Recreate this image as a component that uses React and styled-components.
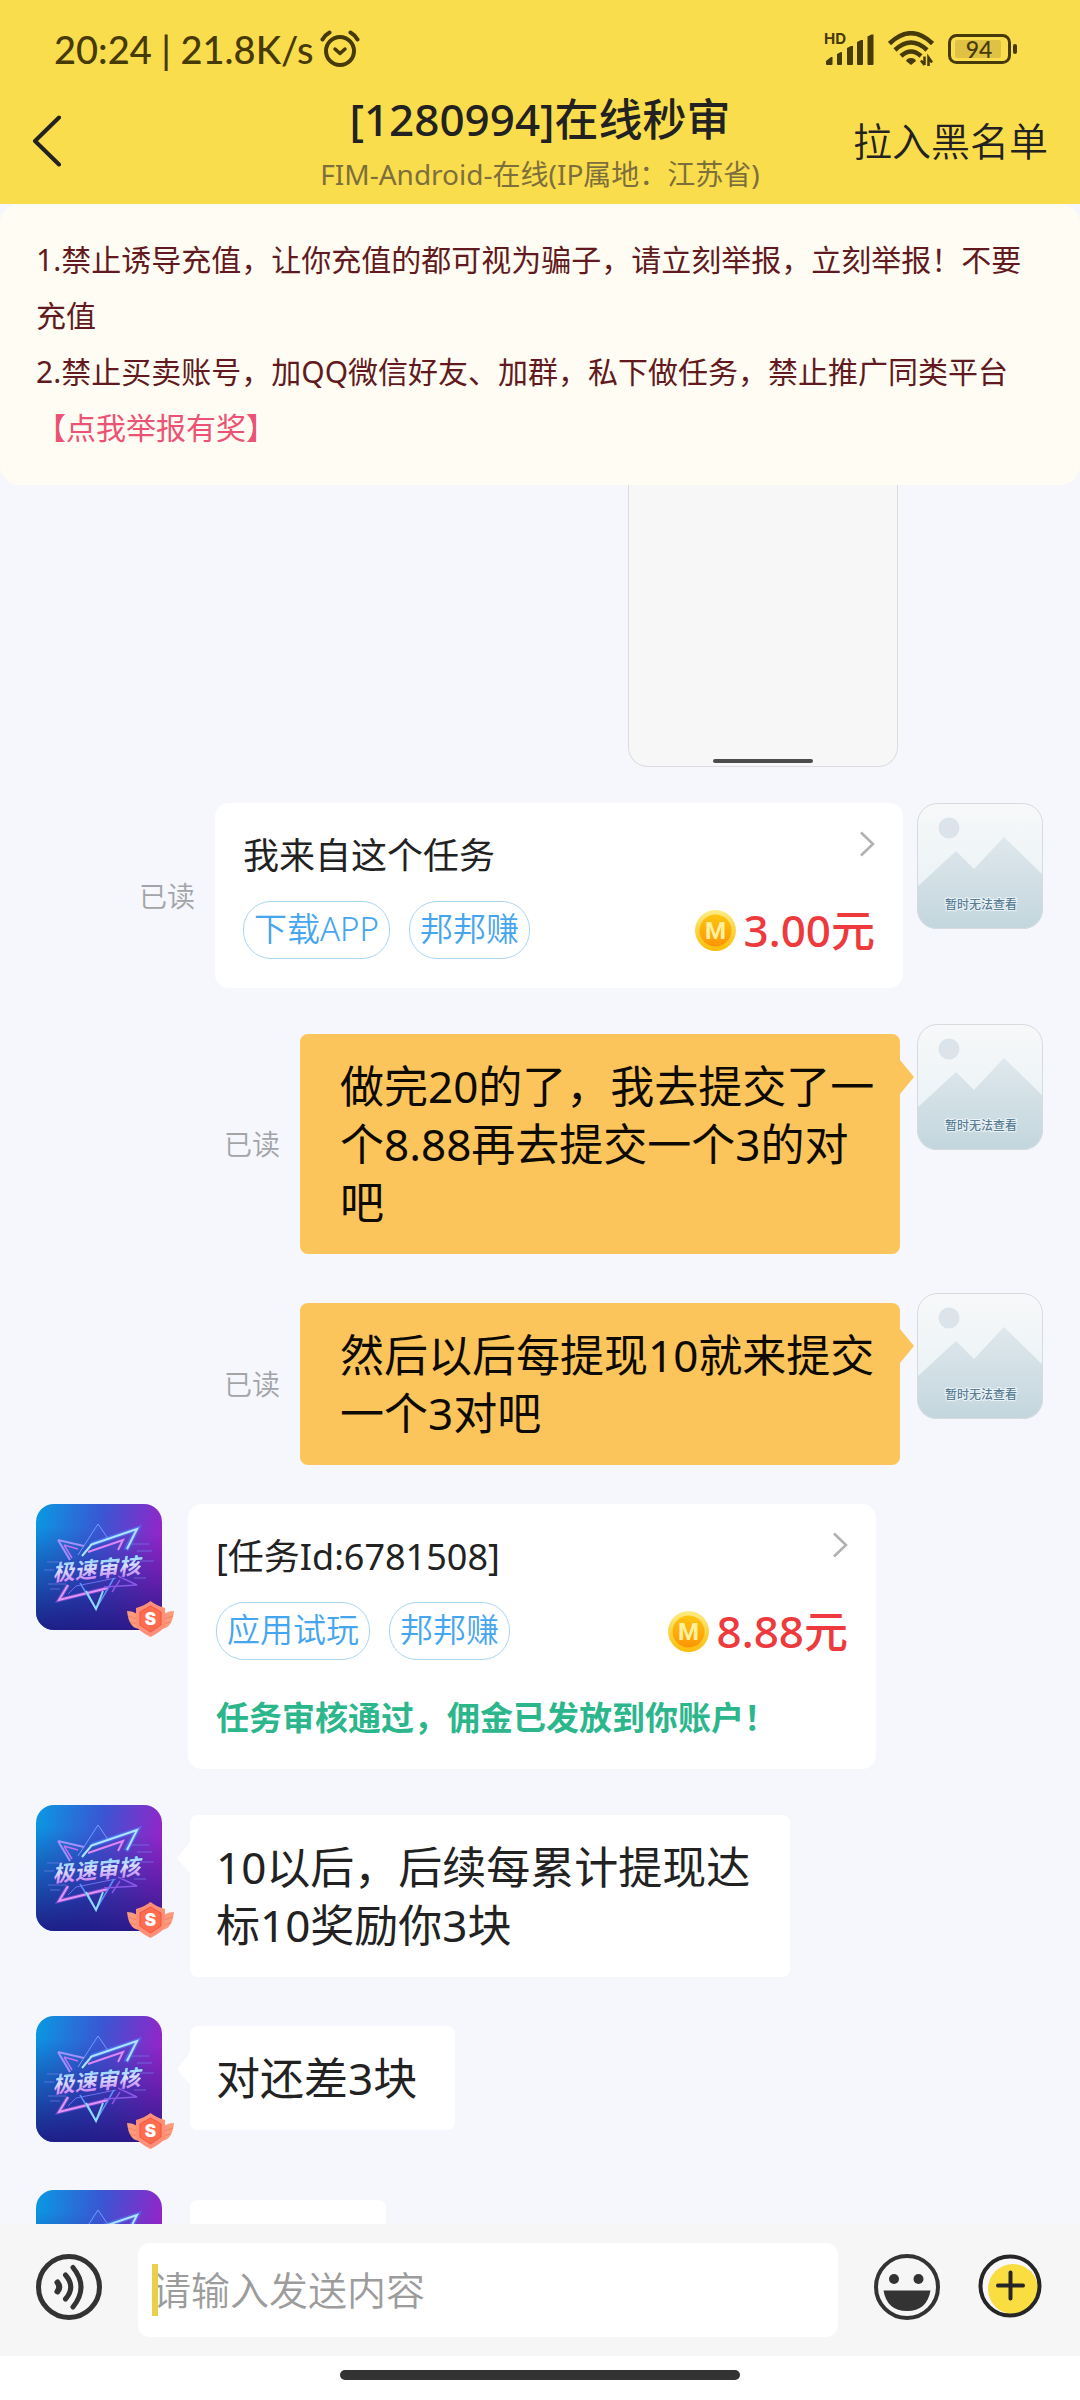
import styled, { createGlobalStyle, ThemeProvider } from "styled-components";

const theme = {
  colors: {
    yellow: "#fadd4c",
    chatBg: "#f5f7fc",
    notice: "#fffdf3",
    bubble: "#fbc55b",
    bar: "#f6f6f6",
    dark: "#333333",
    status: "#463a08",
    text: "#222222",
    blue: "#45a5ee",
    green: "#2bb68c",
    red: "#ee3a3c",
  },
};

const GlobalStyle = createGlobalStyle`
  * {
    box-sizing: border-box;
  }
  body {
    margin: 0;
    font-family: "Noto Sans", "Noto Sans CJK SC", sans-serif;
    color: ${(props) => props.theme.colors.text};
  }
  h1, p {
    margin: 0;
    font-weight: 400;
  }
  button {
    padding: 0;
    border: 0;
    background: none;
    font: inherit;
    color: inherit;
    cursor: pointer;
  }
  svg {
    display: block;
    flex: none;
  }
`;

const Page = styled.div`
  display: flex;
  flex-direction: column;
  height: 100vh;
  overflow: hidden;
  background-color: ${(props) => props.theme.colors.chatBg};
`;

/// header
const Header = styled.header`
  flex: none;
  background-color: ${(props) => props.theme.colors.yellow};
`;
const StatusBar = styled.div`
  display: flex;
  justify-content: space-between;
  align-items: center;
  height: 70px;
  padding: 28px 62px 0 54px;
  color: ${(props) => props.theme.colors.status};
`;
const StatusGroup = styled.div`
  display: flex;
  align-items: center;
  gap: ${(props) => props.$gap}px;
  font-family: Lato, sans-serif;
  font-size: 38px;
  font-weight: 500;
  line-height: 42px;
`;
const Nav = styled.nav`
  display: grid;
  grid-template-columns: 1fr auto 1fr;
  align-items: center;
  height: 134px;
  padding: 8px 32px 0;
`;
const BackButton = styled.button`
  justify-self: start;
`;
const Heading = styled.div`
  padding-top: 12px;
  text-align: center;
`;
const Title = styled.h1`
  font-size: 44px;
  font-weight: 500;
  line-height: 54px;
`;
const SubTitle = styled.p`
  color: #7d6f3c;
  font-size: 28px;
  line-height: 56px;
`;
const BlockButton = styled.button`
  justify-self: end;
  font-size: 39px;
  font-weight: 350;
  line-height: 56px;
`;

/// notice
const Notice = styled.section`
  flex: none;
  padding: 28px 36px 29px;
  border-radius: 20px;
  background-color: ${(props) => props.theme.colors.notice};
  color: #621a20;
  font-size: 30px;
  line-height: 56px;
`;
const ReportLink = styled.a`
  display: block;
  color: #ec5273;
  text-decoration: none;
`;

/// chat
const Chat = styled.main`
  flex: 1;
  min-height: 0;
  overflow: hidden;
  display: flex;
  flex-direction: column;
  gap: 36px;
  padding: 0 37px 0 36px;
`;
const Row = styled.div`
  flex: none;
  display: flex;
  align-items: flex-start;
  flex-direction: ${(props) => (props.$mine ? "row-reverse" : "row")};
  gap: ${(props) => (props.$mine ? 14 : 26)}px;
`;
const Photo = styled.div`
  flex: none;
  align-self: flex-end;
  display: flex;
  justify-content: center;
  align-items: flex-end;
  width: 270px;
  height: 282px;
  margin-right: 145px;
  padding-bottom: 3px;
  border: 1px solid #dcdddf;
  border-top: 0;
  border-radius: 0 0 20px 20px;
  background-color: #f7f7f7;
`;
const PhotoBar = styled.div`
  width: 100px;
  height: 4px;
  border-radius: 2px;
  background-color: #4c4c4c;
`;
const AvatarBox = styled.div`
  position: relative;
  flex: none;
  width: 126px;
  height: 138px;
`;
const Badge = styled.svg`
  position: absolute;
  left: 91px;
  top: 97px;
`;
const Body = styled.div`
  display: flex;
  align-items: center;
  gap: 20px;
  min-width: 0;
  margin: ${(props) => (props.$card ? "0" : "10px 3px 3px 2px")};
`;
const ReadMark = styled.span`
  flex: none;
  color: #a3a4a7;
  font-size: 28px;
  font-weight: 350;
  line-height: 40px;
`;
const Bubble = styled.div`
  position: relative;
  max-width: 600px;
  min-width: ${(props) => (props.$mine ? 0 : 196)}px;
  min-height: 104px;
  padding: ${(props) => (props.$mine ? "23px 22px 23px 40px" : "23px 38px 23px 26px")};
  border-radius: 8px;
  background-color: ${(props) => (props.$mine ? props.theme.colors.bubble : "#ffffff")};
  color: ${(props) => (props.$mine ? "#0d0a04" : props.theme.colors.text)};
  font-size: 44px;
  line-height: 58px;
  &::after {
    content: "";
    position: absolute;
    top: 26px;
    ${(props) => (props.$mine ? "right: -14px" : "left: -13px")};
    width: 14px;
    height: 34px;
    background-color: inherit;
    clip-path: ${(props) =>
      props.$mine ? "polygon(0 0, 100% 50%, 0 100%)" : "polygon(100% 0, 0 50%, 100% 100%)"};
  }
`;
const Card = styled.article`
  width: 688px;
  padding: 28px 28px 29px;
  border-radius: 14px;
  background-color: #ffffff;
`;
const CardTop = styled.div`
  display: flex;
  justify-content: space-between;
  align-items: flex-start;
  margin-bottom: 20px;
`;
const CardTitle = styled.p`
  font-size: 36px;
  line-height: 50px;
`;
const CardLine = styled.div`
  display: flex;
  align-items: center;
  gap: 19px;
`;
const Tag = styled.span`
  height: 58px;
  padding: 0 10px;
  border: 1px solid #a9d5ee;
  border-radius: 28px;
  color: ${(props) => props.theme.colors.blue};
  font-size: 33px;
  font-weight: 350;
  line-height: 54px;
`;
const Price = styled.strong`
  display: flex;
  align-items: center;
  gap: 8px;
  margin-left: auto;
  color: ${(props) => props.theme.colors.red};
  font-size: 44px;
  font-weight: 500;
  line-height: 58px;
`;
const Result = styled.p`
  margin-top: 36px;
  color: ${(props) => props.theme.colors.green};
  font-size: 33px;
  font-weight: 700;
  line-height: 44px;
`;

/// input bar
const InputBar = styled.form`
  flex: none;
  display: flex;
  align-items: center;
  height: 132px;
  padding: 0 38px 0 36px;
  background-color: ${(props) => props.theme.colors.bar};
`;
const Field = styled.label`
  position: relative;
  flex: 1;
  margin: 0 36px;
`;
const TextInput = styled.input`
  display: block;
  width: 100%;
  height: 94px;
  padding: 0 14px 2px;
  border: 0;
  border-radius: 12px;
  outline: 0;
  background-color: #ffffff;
  font-family: inherit;
  font-size: 39px;
  font-weight: 350;
  &::placeholder {
    color: #9c9c9c;
    opacity: 1;
  }
`;
const Caret = styled.span`
  position: absolute;
  left: 14px;
  top: 21px;
  width: 6px;
  height: 52px;
  background-color: #ead04a;
`;
const IconButton = styled.button`
  padding-bottom: 6px;
  & + & {
    margin-left: 38px;
  }
`;
const HomeArea = styled.footer`
  flex: none;
  height: 44px;
  padding-top: 14px;
  background-color: #ffffff;
`;
const HomeBar = styled.div`
  width: 37%;
  height: 10px;
  margin: 0 auto;
  border-radius: 5px;
  background-color: ${(props) => props.theme.colors.dark};
`;

function AlarmIcon() {
  return (
    <svg width="40" height="38" viewBox="0 0 40 38" fill="none" stroke="currentColor" strokeLinecap="round">
      <circle cx="20" cy="21" r="14" strokeWidth="4" />
      <path d="M2.500 9.500Q5 5 9.500 2.500M30.500 2.500Q35 5 37.500 9.500" strokeWidth="4" />
      <path d="M15 19l5 4.500 5-4.500" strokeWidth="3.500" strokeLinejoin="round" />
    </svg>
  );
}

function SignalIcon() {
  return (
    <svg width="50" height="44" viewBox="0 -6 50 44" fill="currentColor">
      <text x="0" y="11" fontFamily="Inter, sans-serif" fontSize="15" fontWeight="700">HD</text>
      <path d="M2 31v-3l5-4h1.500v7q0 1-1 1H3q-1 0-1-1zM13 21l4-2h1v12q0 1-1 1h-3q-1 0-1-1zM23 15l4-2h2v18q0 1-1 1h-4q-1 0-1-1zM33 9l4-2h2v24q0 1-1 1h-4q-1 0-1-1zM43.500 3.500l4-2h2V31q0 1-1 1h-4q-1 0-1-1z" />
    </svg>
  );
}

function WifiIcon() {
  return (
    <svg width="46" height="36" viewBox="0 0 46 36" fill="none" stroke="currentColor" strokeWidth="4.500">
      <path d="M1.500 12.500Q23-8 44.500 12.500" />
      <path d="M7 19Q23 4 39 19" />
      <path d="M13 25Q23 16 33 25" />
      <path d="M23 27q4 0 5 3l-5 4-5-4q1-3 5-3z" fill="currentColor" stroke="none" />
      <path d="M36.500 25.500v8.500M33 29.500l3.500 4.500M40.500 35v-8.500l3.500 5" strokeWidth="2.500" />
    </svg>
  );
}

function BatteryIcon() {
  return (
    <svg width="70" height="30" viewBox="0 0 70 30">
      <rect x="1.500" y="1.500" width="60" height="27" rx="7" fill="none" stroke="currentColor" strokeWidth="3" />
      <rect x="7" y="6" width="46" height="18" rx="2" fill="#dfc244" />
      <rect x="65" y="10" width="4" height="10" rx="2" fill="currentColor" />
      <text x="31" y="23.500" textAnchor="middle" fontFamily="Lato, sans-serif" fontSize="23" fontWeight="500" fill="currentColor">
        94
      </text>
    </svg>
  );
}

function Chevron() {
  return (
    <svg width="16" height="26" viewBox="0 0 16 26" fill="none" stroke="#b0b0b0" strokeWidth="2.500">
      <path d="M2 1.500L14 13 2 24.500" />
    </svg>
  );
}

function Coin() {
  return (
    <svg width="41" height="41" viewBox="0 0 41 41">
      <defs>
        <linearGradient id="coinRim" x1="0" y1="0" x2="0" y2="1">
          <stop offset="0" stopColor="#fdec85" />
          <stop offset="1" stopColor="#fabd08" />
        </linearGradient>
        <linearGradient id="coinFace" x1="0" y1="0" x2="0" y2="1">
          <stop offset="0" stopColor="#fdc60f" />
          <stop offset="1" stopColor="#fd9406" />
        </linearGradient>
      </defs>
      <circle cx="20.500" cy="20.500" r="20.500" fill="url(#coinRim)" />
      <circle cx="20.500" cy="20.500" r="16" fill="url(#coinFace)" />
      <text x="20.500" y="29" textAnchor="middle" fontFamily="Roboto, sans-serif" fontSize="24" fontWeight="700" fill="#fff0a0">
        M
      </text>
    </svg>
  );
}

function PlaceholderAvatar() {
  return (
    <AvatarBox>
      <svg width="126" height="126" viewBox="0 0 126 126">
        <defs>
          <linearGradient id="sky" x1="0" y1="0" x2="0" y2="1">
            <stop offset="0" stopColor="#f7f8f9" />
            <stop offset="1" stopColor="#e6f1f4" />
          </linearGradient>
          <linearGradient id="hill" x1="0" y1="0" x2="0" y2="1">
            <stop offset="0" stopColor="#dfe8ed" />
            <stop offset="1" stopColor="#c3d6dd" />
          </linearGradient>
          <clipPath id="frame">
            <rect width="126" height="126" rx="20" />
          </clipPath>
        </defs>
        <g clipPath="url(#frame)">
          <rect width="126" height="126" fill="url(#sky)" />
          <circle cx="32" cy="25" r="10.500" fill="#dce4eb" />
          <path d="M0 84L39 48 57 66 87 34 126 72V126H0z" fill="url(#hill)" />
        </g>
        <rect x="0.500" y="0.500" width="125" height="125" rx="20" fill="none" stroke="#d5dbdf" />
        <text
          x="64"
          y="106"
          textAnchor="middle"
          fontSize="12"
          fontWeight="500"
          fill="#587c94"
          stroke="#edf4f7"
          strokeWidth="2"
          paintOrder="stroke"
        >
          暂时无法查看
        </text>
      </svg>
    </AvatarBox>
  );
}

function SellerAvatar() {
  return (
    <AvatarBox>
      <svg width="126" height="126" viewBox="0 0 126 126">
        <defs>
          <linearGradient id="base" x1="0" y1="0.100" x2="1" y2="0.300">
            <stop offset="0" stopColor="#0a98e2" />
            <stop offset="0.500" stopColor="#3957d2" />
            <stop offset="1" stopColor="#9523c8" />
          </linearGradient>
          <linearGradient id="shade" x1="0.450" y1="0.200" x2="0.400" y2="1">
            <stop offset="0" stopColor="#1a1c86" stopOpacity="0" />
            <stop offset="1" stopColor="#1d1780" stopOpacity="0.900" />
          </linearGradient>
          <linearGradient id="word" x1="0" y1="0" x2="0" y2="1">
            <stop offset="0.200" stopColor="#8fd8ff" />
            <stop offset="0.500" stopColor="#d9dcff" />
            <stop offset="0.900" stopColor="#c67cf2" />
          </linearGradient>
          <clipPath id="tile">
            <rect width="126" height="126" rx="18" />
          </clipPath>
        </defs>
        <g clipPath="url(#tile)">
          <rect width="126" height="126" fill="url(#base)" />
          <rect width="126" height="126" fill="url(#shade)" />
        </g>
        <g fill="none" strokeLinejoin="miter">
          <path d="M42 51L62 20 73 36" stroke="#6f9dff" strokeWidth="1" />
          <path d="M22 36L48 42M22 36L34 56" stroke="#9f92ff" strokeWidth="2" />
          <path d="M28 41L42 45M28 41L36 54" stroke="#c46ff0" strokeWidth="1.500" />
          <path d="M56 40L101 25 90 46" stroke="#4c8dff" strokeWidth="5" opacity="0.500" />
          <path d="M54 41L101 25 91 45M46 52L56 40" stroke="#aee3ff" strokeWidth="2" />
          <path d="M52 48L87 36 82 46" stroke="#dd86f7" strokeWidth="2" />
          <path d="M72 84L23 96 32 81" stroke="#b45cf0" strokeWidth="4" opacity="0.500" />
          <path d="M72 84L23 96 32 81" stroke="#e394f8" strokeWidth="2" />
          <path d="M32 90L40 82 80 74" stroke="#6f6df0" strokeWidth="1" />
          <path d="M44 79L60 105 78 74" stroke="#5b8dff" strokeWidth="1.500" />
          <path d="M50 87L60 105 67 87" stroke="#8fdcff" strokeWidth="2" />
          <path d="M82 72L101 81 68 83M84 76L76 88" stroke="#8a57e8" strokeWidth="1.500" />
          <path d="M11 58H26M8 66H18M95 40H113M101 47H116M12 80H30M14 85H24M98 74H110M104 57H118" stroke="#7d86f0" strokeWidth="1" opacity="0.600" />
        </g>
        <text
          x="17"
          y="77"
          fontSize="22"
          fontWeight="700"
          fontStyle="italic"
          fill="url(#word)"
          stroke="#3a35b5"
          strokeWidth="1"
          paintOrder="stroke"
          transform="rotate(-5 17 77)"
        >
          极速审核
        </text>
      </svg>
      <Badge width="47" height="36" viewBox="0 0 47 36">
        <path d="M0 10Q6 10 10 13L12 28Q6 27 4 23 1 19 0 10zM47 10Q41 10 37 13L35 28Q41 27 43 23 46 19 47 10z" fill="#fb9a7c" />
        <path d="M1 15L10 18M3 21L11 23M46 15L37 18M44 21L36 23" stroke="#f7825f" strokeWidth="1" />
        <path d="M23.500 0Q30 5 38 7V24Q37 29 23.500 36 10 29 9 24V7Q17 5 23.500 0z" fill="#fc8f78" />
        <path d="M23.500 5L34 11V24L23.500 31 13 24V11z" fill="#ff6d50" stroke="#f4553c" strokeWidth="1" />
        <text x="23.500" y="24" textAnchor="middle" fontFamily="Inter, sans-serif" fontSize="17" fontWeight="900" fill="#ffffff">
          S
        </text>
      </Badge>
    </AvatarBox>
  );
}

function Message({ mine, card, read, children }) {
  return (
    <Row $mine={mine}>
      {mine ? <PlaceholderAvatar /> : <SellerAvatar />}
      <Body $card={card}>
        {read && <ReadMark>已读</ReadMark>}
        {card ? children : <Bubble $mine={mine}>{children}</Bubble>}
      </Body>
    </Row>
  );
}

function TaskCard({ title, tags, price, result }) {
  return (
    <Card>
      <CardTop>
        <CardTitle>{title}</CardTitle>
        <Chevron />
      </CardTop>
      <CardLine>
        {tags.map((tag) => (
          <Tag key={tag}>{tag}</Tag>
        ))}
        <Price>
          <Coin />
          {price}
        </Price>
      </CardLine>
      {result && <Result>{result}</Result>}
    </Card>
  );
}

function App() {
  return (
    <ThemeProvider theme={theme}>
      <GlobalStyle />
      <Page lang="zh-CN">
        <Header>
          <StatusBar>
            <StatusGroup $gap={7}>
              20:24 | 21.8K/s
              <AlarmIcon />
            </StatusGroup>
            <StatusGroup $gap={14}>
              <SignalIcon />
              <WifiIcon />
              <BatteryIcon />
            </StatusGroup>
          </StatusBar>
          <Nav>
            <BackButton type="button" aria-label="返回">
              <svg width="30" height="52" viewBox="0 0 30 52" fill="none" stroke="#222222" strokeWidth="4" strokeLinecap="round" strokeLinejoin="round">
                <path d="M27 2.500L3 26 27 49.500" />
              </svg>
            </BackButton>
            <Heading>
              <Title>[1280994]在线秒审</Title>
              <SubTitle>FIM-Android-在线(IP属地：江苏省)</SubTitle>
            </Heading>
            <BlockButton type="button">拉入黑名单</BlockButton>
          </Nav>
        </Header>
        <Notice>
          <p>1.禁止诱导充值，让你充值的都可视为骗子，请立刻举报，立刻举报！不要充值</p>
          <p>2.禁止买卖账号，加QQ微信好友、加群，私下做任务，禁止推广同类平台</p>
          <ReportLink href="#">【点我举报有奖】</ReportLink>
        </Notice>
        <Chat>
          <Photo>
            <PhotoBar />
          </Photo>
          <Message mine card read>
            <TaskCard title="我来自这个任务" tags={["下载APP", "邦邦赚"]} price="3.00元" />
          </Message>
          <Message mine read>做完20的了，我去提交了一个8.88再去提交一个3的对吧</Message>
          <Message mine read>然后以后每提现10就来提交一个3对吧</Message>
          <Message card>
            <TaskCard
              title="[任务Id:6781508]"
              tags={["应用试玩", "邦邦赚"]}
              price="8.88元"
              result="任务审核通过，佣金已发放到你账户！"
            />
          </Message>
          <Message>10以后，后续每累计提现达标10奖励你3块</Message>
          <Message>对还差3块</Message>
          <Message />
        </Chat>
        <InputBar>
          <IconButton type="button" aria-label="语音">
            <svg width="66" height="66" viewBox="0 0 66 66" fill="none" stroke="#333333" strokeWidth="5" strokeLinecap="round">
              <circle cx="33" cy="33" r="30.500" />
              <path d="M21.500 28.500Q25 33 21.500 37.500" strokeWidth="6" />
              <path d="M29.500 21Q40 33 29.500 45" />
              <path d="M37 13.500Q53 33 37 53" />
            </svg>
          </IconButton>
          <Field>
            <TextInput type="text" placeholder="请输入发送内容" aria-label="请输入发送内容" />
            <Caret />
          </Field>
          <IconButton type="button" aria-label="表情">
            <svg width="66" height="66" viewBox="0 0 66 66" fill="#333333">
              <circle cx="33" cy="33" r="31" fill="none" stroke="#333333" strokeWidth="4" />
              <circle cx="20" cy="25" r="5" />
              <circle cx="44.500" cy="25" r="5" />
              <path d="M9.500 36.500H56.500Q53 57 33 57 13 57 9.500 36.500z" />
            </svg>
          </IconButton>
          <IconButton type="button" aria-label="更多">
            <svg width="64" height="66" viewBox="0 0 64 66">
              <circle cx="32" cy="32" r="29.500" fill="#f9f7fa" />
              <circle cx="35" cy="35" r="25" fill="#fadd40" />
              <circle cx="32" cy="32" r="29.500" fill="none" stroke="#262626" strokeWidth="4" />
              <path d="M32.500 18.500V44.500M20 31.500H45" stroke="#262626" strokeWidth="4" strokeLinecap="round" />
            </svg>
          </IconButton>
        </InputBar>
        <HomeArea>
          <HomeBar />
        </HomeArea>
      </Page>
    </ThemeProvider>
  );
}

export default App;
